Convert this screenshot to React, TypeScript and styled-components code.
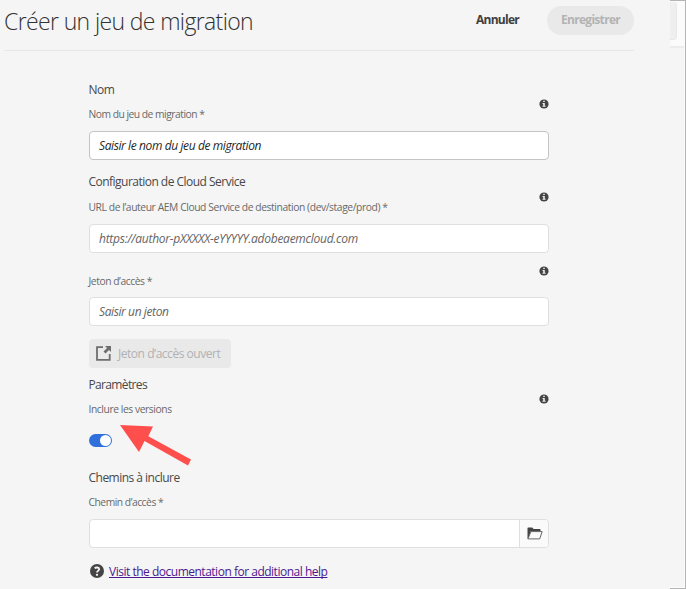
import React from 'react';
import styled, { createGlobalStyle } from 'styled-components';

const GlobalStyle = createGlobalStyle`
  * { box-sizing: border-box; }
  body {
    margin: 0;
    overflow: hidden;
    background: #f5f5f5;
    font-family: "Open Sans", "Noto Sans", sans-serif;
  }
`;

const Screen = styled.div`
  position: relative;
  display: flex;
  width: 686px;
  height: 589px;
  background: #f5f5f5;
`;

const Panel = styled.main`
  width: 670px;
  height: 589px;
`;

const Backdrop = styled.aside`
  width: 16px;
  height: 589px;
  border: solid #b4b4b4;
  border-width: 1px 1px 1px 0;
`;

const BackdropInner = styled.div`
  height: 100%;
  border-right: 1px solid #fcfcfc;
  border-bottom: 1px solid #fcfcfc;
`;

const BackdropBar = styled.div`
  height: 47px;
  padding-top: 1px;
  background: #fbfbfb;
  border-bottom: 2px solid #ececec;
`;

const BackdropButton = styled.div`
  width: 7px;
  height: 38px;
  background: #efefef;
  border: solid #e8e8e8;
  border-width: 0 1px 1px 0;
  border-radius: 0 3px 4px 0;
`;

const Header = styled.header`
  display: flex;
  align-items: center;
  width: 630px;
  height: 51px;
  margin-left: 4px;
  padding-bottom: 9px;
  border-bottom: 1px solid #e7e7e7;
`;

const Title = styled.h1`
  flex: 1;
  margin: 0;
  color: #323232;
  font-size: 23px;
  font-weight: 300;
  line-height: 30px;
  letter-spacing: -0.63px;
  white-space: nowrap;
`;

const CancelButton = styled.button`
  margin: 0 28px 2px 0;
  padding: 0;
  border: 0;
  background: none;
  color: #404040;
  font: 700 12px/20px "Open Sans", sans-serif;
  letter-spacing: -0.74px;
`;

const SaveButton = styled.button`
  width: 87px;
  height: 29px;
  margin-bottom: 1px;
  padding: 0;
  border: 0;
  border-radius: 15px;
  background: #e9e9e9;
  color: #b3b3b3;
  font: 700 12px/20px "Open Sans", sans-serif;
  letter-spacing: -0.7px;
`;

const Form = styled.form`
  width: 460px;
  margin: 29px 0 0 89px;
`;

const Head = styled.div<{ $height: number; $align?: string }>`
  display: flex;
  align-items: ${(p) => p.$align ?? 'center'};
  justify-content: space-between;
  height: ${(p) => p.$height}px;
`;

const HeadText = styled.div<{ $gap?: number; $top?: number }>`
  display: flex;
  flex-direction: column;
  align-self: stretch;
  gap: ${(p) => p.$gap ?? 6}px;
  margin-left: -0.5px;
  padding-top: ${(p) => p.$top ?? 0}px;
`;

const Heading = styled.h2<{ $track?: number }>`
  margin: 0;
  color: #484848;
  font-size: 12px;
  font-weight: 400;
  line-height: 20px;
  letter-spacing: ${(p) => p.$track ?? -0.52}px;
  white-space: nowrap;
`;

const Label = styled.label<{ $track: number }>`
  color: #696969;
  font-size: 10.3px;
  line-height: 16px;
  letter-spacing: ${(p) => p.$track}px;
  white-space: nowrap;
`;

const Field = styled.div<{ $active?: boolean; $after: number; $track?: number }>`
  display: flex;
  align-items: center;
  height: 29px;
  margin: 3px 0 ${(p) => p.$after}px;
  padding: 0 9px 1px;
  border: 1px solid ${(p) => (p.$active ? '#c4c4c4' : '#dfdfdf')};
  border-radius: 4px;
  background: #fff;
  color: ${(p) => (p.$active ? '#262626' : '#646464')};
  font-size: 12px;
  font-style: italic;
  letter-spacing: ${(p) => p.$track ?? -0.4}px;
  white-space: nowrap;
`;

const TokenButton = styled.button`
  display: flex;
  align-items: center;
  gap: 7px;
  width: 142px;
  height: 29px;
  margin-bottom: 7px;
  padding: 0 0 0 7px;
  border: 0;
  border-radius: 4px;
  background: #e9e9e9;
  color: #b1b1b1;
  font: 400 12px/20px "Open Sans", sans-serif;
  letter-spacing: -0.46px;
  white-space: nowrap;
`;

const Toggle = styled.div`
  display: flex;
  align-items: center;
  justify-content: flex-end;
  width: 23px;
  height: 13px;
  margin: 11px 0 21px;
  padding: 1px;
  border-radius: 7px;
  background: #2f70dc;
`;

const Knob = styled.div`
  width: 11px;
  height: 11px;
  border-radius: 50%;
  background: #fff;
`;

const PathPicker = styled.div`
  display: flex;
  height: 29px;
  margin: 3px 0 13px;
  border: 1px solid #dfdfdf;
  border-radius: 4px;
  background: #fff;
  overflow: hidden;
`;

const PathInput = styled.div`
  flex: 1;
`;

const BrowseButton = styled.div`
  display: flex;
  align-items: center;
  justify-content: center;
  width: 29px;
  padding-left: 2px;
  border-left: 1px solid #dfdfdf;
  background: #fafafa;
`;

const HelpRow = styled.div`
  display: flex;
  align-items: center;
  gap: 5px;
  height: 20px;
  padding-left: 1px;
`;

const HelpLink = styled.a`
  margin-top: 2px;
  color: #4c1790;
  font-size: 12px;
  line-height: 20px;
  letter-spacing: -0.49px;
  text-decoration: underline;
  text-decoration-skip-ink: none;
  text-underline-offset: 1px;
  white-space: nowrap;
`;

const Pointer = styled.svg`
  position: absolute;
  left: 119px;
  top: 424px;
`;

const InfoSvg = styled.svg<{ $top?: number }>`
  flex: none;
  margin-top: ${(p) => p.$top ?? 0}px;
`;

const InfoIcon = ({ top }: { top?: number }) => (
  <InfoSvg $top={top} width="10" height="10" viewBox="0 0 10 10">
    <circle cx="5" cy="5" r="4.6" fill="#444" />
    <path d="M4.2 1.7h1.6v1.4H4.2zM3.5 4h2.3v2.8h.8v1H3.5v-1h.7V5h-.7z" fill="#eee" />
  </InfoSvg>
);

const OpenIcon = () => (
  <svg width="15" height="15" viewBox="0 0 15 15">
    <path d="M7 1.2H1v12.7h12.7V8" fill="none" stroke="#6e6e6e" strokeWidth="1.8" />
    <path d="M9 0h6v6l-2-2-3.5 3.5-2-2L11 2z" fill="#6e6e6e" />
  </svg>
);

const FolderIcon = () => (
  <svg width="16" height="13" viewBox="0 0 16 13">
    <path d="M.5 12V1.2Q.5.5 1.2.5h4L6.6 2h6.2q.7 0 .7.7V4.3H3.8L1.5 11z" fill="#444" />
    <path d="M3.9 4.6h11.3l-2.5 7.3H1z" fill="#fafafa" stroke="#666" strokeWidth="1" strokeLinejoin="round" />
  </svg>
);

const HelpIcon = () => (
  <svg width="14" height="14" viewBox="0 0 14 14">
    <circle cx="7" cy="7" r="7" fill="#444" />
    <path d="M4.7 4.3C5.7 3.2 9.2 3 9.2 5.2 9.2 6.7 7 6.6 7 8.6" fill="none" stroke="#f5f5f5" strokeWidth="1.8" />
    <circle cx="7" cy="10.8" r="1.15" fill="#f5f5f5" />
  </svg>
);

export default function App() {
  return (
    <>
      <GlobalStyle />
      <Screen>
        <Panel>
          <Header>
            <Title>Créer un jeu de migration</Title>
            <CancelButton>Annuler</CancelButton>
            <SaveButton>Enregistrer</SaveButton>
          </Header>
          <Form>
            <Head $height={48}>
              <HeadText>
                <Heading>Nom</Heading>
                <Label $track={-0.5}>Nom du jeu de migration *</Label>
              </HeadText>
              <InfoIcon />
            </Head>
            <Field $active $after={12}>Saisir le nom du jeu de migration</Field>

            <Head $height={49}>
              <HeadText $gap={7}>
                <Heading>Configuration de Cloud Service</Heading>
                <Label $track={-0.41}>
                  URL de l’auteur AEM Cloud Service de destination (dev/stage/prod) *
                </Label>
              </HeadText>
              <InfoIcon top={1} />
            </Head>
            <Field $after={12} $track={-0.26}>https://author-pXXXXX-eYYYYY.adobeaemcloud.com</Field>

            <Head $height={29} $align="flex-start">
              <HeadText $top={8}>
                <Label $track={-0.44}>Jeton d’accès *</Label>
              </HeadText>
              <InfoIcon top={0.5} />
            </Head>
            <Field $after={13}>Saisir un jeton</Field>
            <TokenButton type="button">
              <OpenIcon />
              Jeton d’accès ouvert
            </TokenButton>

            <Head $height={48}>
              <HeadText>
                <Heading $track={-0.65}>Paramètres</Heading>
                <Label $track={-0.43}>Inclure les versions</Label>
              </HeadText>
              <InfoIcon />
            </Head>
            <Toggle>
              <Knob />
            </Toggle>

            <Head $height={48}>
              <HeadText>
                <Heading>Chemins à inclure</Heading>
                <Label $track={-0.48}>Chemin d’accès *</Label>
              </HeadText>
            </Head>
            <PathPicker>
              <PathInput />
              <BrowseButton>
                <FolderIcon />
              </BrowseButton>
            </PathPicker>
            <HelpRow>
              <HelpIcon />
              <HelpLink>Visit the documentation for additional help</HelpLink>
            </HelpRow>
          </Form>
        </Panel>
        <Backdrop>
          <BackdropInner>
            <BackdropBar>
              <BackdropButton />
            </BackdropBar>
          </BackdropInner>
        </Backdrop>
        <Pointer width="74" height="44" viewBox="119 424 74 44">
          <path
            d="M120 425 153 426.6 148.3 436.3 191 459.5 188 465.5 144.5 441 139 452z"
            fill="#ff4f4c"
          />
        </Pointer>
      </Screen>
    </>
  );
}
